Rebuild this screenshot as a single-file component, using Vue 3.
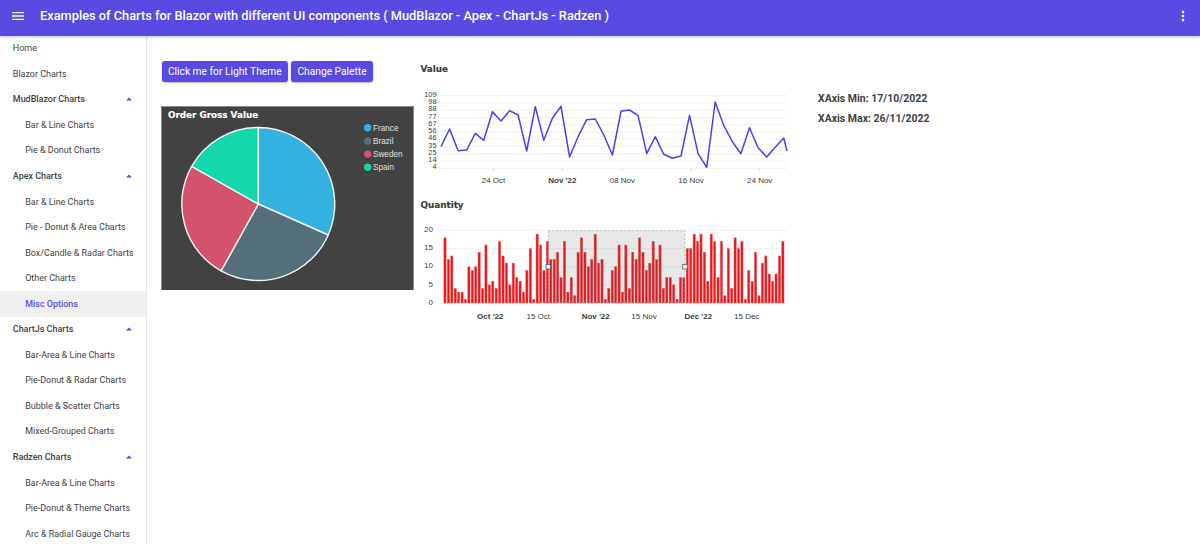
<template>
  <div class="page">
    <header class="appbar">
      <svg class="bar-icon" viewBox="0 0 24 24"><path d="M3 18h18v-2H3v2zm0-5h18v-2H3v2zm0-7v2h18V6H3z" /></svg>
      <h6 class="bar-title">Examples of Charts for Blazor with different UI components ( MudBlazor - Apex - ChartJs - Radzen )</h6>
      <svg class="bar-icon bar-more" viewBox="0 0 24 24"><path d="M12 8c1.1 0 2-.9 2-2s-.9-2-2-2-2 .9-2 2 .9 2 2 2zm0 2c-1.1 0-2 .9-2 2s.9 2 2 2 2-.9 2-2-.9-2-2-2zm0 6c-1.1 0-2 .9-2 2s.9 2 2 2 2-.9 2-2-.9-2-2-2z" /></svg>
    </header>

    <div class="layout">
      <nav class="drawer">
        <a
          v-for="item in navItems"
          :key="item.id"
          class="nav-item"
          :class="[`nav-item--${item.kind}`, { 'nav-item--active': item.active }]"
        >
          {{ item.label }}
          <svg v-if="item.kind === 'group'" class="caret" viewBox="0 0 8 5"><path d="M0 4.4 L4 0.4 L8 4.4 Z" /></svg>
        </a>
      </nav>

      <main class="content">
        <div class="col-left">
          <div class="buttons">
            <button class="btn">Click me for Light Theme</button>
            <button class="btn">Change Palette</button>
          </div>

          <svg class="pie" viewBox="0 0 253 184" width="253" height="184">
            <rect x="0" y="0" width="253" height="184" fill="#424242" />
            <path d="M0.5 184V0.5H252.5V184" fill="none" stroke="#8c8c8c" stroke-width="1" />
            <text x="7" y="12" class="chart-title pie-title">Order Gross Value</text>
            <path
              v-for="s in pieSlices"
              :key="s.name"
              :d="s.d"
              :fill="s.color"
              stroke="#f4f4f4"
              stroke-width="1.4"
            />
            <g v-for="(s, i) in pieSlices" :key="'l' + s.name">
              <circle cx="206.7" :cy="21.7 + i * 13.2" r="3.7" :fill="s.color" />
              <text x="212" :y="24.8 + i * 13.2" class="legend">{{ s.name }}</text>
            </g>
          </svg>
        </div>

        <div class="col-charts">
          <svg class="chart" viewBox="0 0 375 135" width="375" height="135">
            <text x="5.5" y="12" class="chart-title">Value</text>
            <line
              v-for="(t, i) in lineTicks"
              :key="t"
              x1="26"
              x2="372"
              :y1="35.7 + i * 7.26"
              :y2="35.7 + i * 7.26"
              class="grid"
            />
            <text
              v-for="(t, i) in lineTicks"
              :key="'y' + t"
              x="21.5"
              :y="37 + i * 7.23"
              text-anchor="end"
              class="axis axis--small"
            >{{ t }}</text>
            <g v-for="l in lineLabels" :key="l.text">
              <line :x1="l.x" :x2="l.x" y1="108.5" y2="111.5" stroke="#dcdcdc" stroke-width="1" />
              <text :x="l.x" y="123" text-anchor="middle" class="axis" :class="{ 'axis--bold': l.bold }">{{ l.text }}</text>
            </g>
            <polyline :points="linePoints" class="line" />
          </svg>

          <svg class="chart" viewBox="0 0 375 130" width="375" height="130">
            <text x="5.5" y="13" class="chart-title">Quantity</text>
            <line
              v-for="t in barTicks"
              :key="t"
              x1="26"
              x2="372"
              :y1="barY(t)"
              :y2="barY(t)"
              class="grid"
            />
            <text
              v-for="t in barTicks"
              :key="'y' + t"
              x="18"
              :y="barY(t) + 1.6"
              text-anchor="end"
              class="axis"
            >{{ t }}</text>
            <g v-for="l in barLabels" :key="l.text">
              <line :x1="l.x" :x2="l.x" y1="108" y2="110" stroke="#dcdcdc" stroke-width="1" />
              <text :x="l.x" y="123.5" text-anchor="middle" class="axis" :class="{ 'axis--bold': l.bold }">{{ l.text }}</text>
            </g>
            <rect
              v-for="(b, i) in barValues"
              :key="i"
              :x="28.9 + i * 3.413"
              :y="barY(b)"
              width="2.2"
              :height="b * 3.62"
              class="bar"
            />
            <rect x="133.3" y="35.7" width="136.7" height="72.3" class="selection" />
            <rect x="131" y="69.4" width="4.6" height="4.6" class="handle" />
            <rect x="267.7" y="69.4" width="4.6" height="4.6" class="handle" />
          </svg>
        </div>

        <div class="col-info">
          <p class="info">XAxis Min: 17/10/2022</p>
          <p class="info">XAxis Max: 26/11/2022</p>
        </div>
      </main>
    </div>
  </div>
</template>

<script setup>
const group = (label, children) => [
  { label, kind: "group" },
  ...children.map((c) => ({ label: c, kind: "child", active: c === "Misc Options" })),
];

const navItems = [
  { label: "Home", kind: "top" },
  { label: "Blazor Charts", kind: "top" },
  ...group("MudBlazor Charts", ["Bar & Line Charts", "Pie & Donut Charts"]),
  ...group("Apex Charts", [
    "Bar & Line Charts",
    "Pie - Donut & Area Charts",
    "Box/Candle & Radar Charts",
    "Other Charts",
    "Misc Options",
  ]),
  ...group("ChartJs Charts", [
    "Bar-Area & Line Charts",
    "Pie-Donut & Radar Charts",
    "Bubble & Scatter Charts",
    "Mixed-Grouped Charts",
  ]),
  ...group("Radzen Charts", [
    "Bar-Area & Line Charts",
    "Pie-Donut & Theme Charts",
    "Arc & Radial Gauge Charts",
  ]),
].map((item, i) => ({ ...item, id: i }));

// pie, angles in degrees clockwise from the top
const pieCx = 97.3;
const pieCy = 98;
const pieR = 76.5;
const polar = (deg) => {
  const a = (deg * Math.PI) / 180;
  return [pieCx + pieR * Math.sin(a), pieCy - pieR * Math.cos(a)];
};
const slice = (from, to) => {
  const [x1, y1] = polar(from);
  const [x2, y2] = polar(to);
  const large = to - from > 180 ? 1 : 0;
  return `M${pieCx} ${pieCy} L${x1} ${y1} A${pieR} ${pieR} 0 ${large} 1 ${x2} ${y2} Z`;
};
const pieSlices = [
  { name: "France", color: "#33b2df", d: slice(0, 113.9) },
  { name: "Brazil", color: "#546e7a", d: slice(113.9, 209.1) },
  { name: "Sweden", color: "#d4526e", d: slice(209.1, 299.5) },
  { name: "Spain", color: "#13d8aa", d: slice(299.5, 360) },
];

// line chart
const lineTicks = [109, 98, 88, 77, 67, 56, 46, 35, 25, 14, 4];
const lineLabels = [
  { text: "24 Oct", x: 78.5 },
  { text: "Nov '22", x: 147.3, bold: true },
  { text: "08 Nov", x: 207.3 },
  { text: "16 Nov", x: 276 },
  { text: "24 Nov", x: 344.7 },
];
const lineY = [
  275, 222, 287, 285, 235, 256, 170, 198, 167, 180, 288, 155, 256, 190, 154, 306, 245, 194, 192, 240,
  300, 169, 165, 182, 296, 245, 298, 310, 303, 181, 296, 337, 141, 212, 260, 296, 218, 278, 306, 277, 249,
];
const linePoints =
  lineY.map((y, i) => `${(26 + i * 8.57).toFixed(1)},${(y / 3 - 5).toFixed(1)}`).join(" ") + " 372,91";

// bar chart
const barTicks = [20, 15, 10, 5, 0];
const barY = (v) => 108 - v * 3.62;
const barLabels = [
  { text: "Oct '22", x: 75.3, bold: true },
  { text: "15 Oct", x: 123.3 },
  { text: "Nov '22", x: 180.7, bold: true },
  { text: "15 Nov", x: 229 },
  { text: "Dec '22", x: 283.3, bold: true },
  { text: "15 Dec", x: 331.7 },
];
const barValues = [
  18, 12, 13, 4, 3, 3, 1, 10, 9, 10, 14, 4, 16, 5, 6, 4, 17, 13, 11, 5,
  11, 7, 6, 3, 9, 15, 1, 19, 16, 9, 17, 12, 12, 14, 7, 17, 3, 7, 2, 14,
  18, 14, 10, 12, 19, 11, 12, 1, 4, 9, 10, 16, 3, 16, 4, 14, 12, 18, 14, 9,
  11, 17, 12, 16, 4, 7, 7, 5, 1, 7, 7, 15, 15, 19, 17, 19, 14, 6, 19, 17,
  7, 17, 2, 15, 4, 18, 15, 17, 1, 9, 6, 14, 2, 11, 13, 8, 6, 8, 13, 17,
];
</script>

<style>
html,
body {
  margin: 0;
  overflow: hidden;
  background: #fff;
}
</style>

<style scoped>
.page {
  width: 1200px;
  height: 544px;
  overflow: hidden;
  font-family: Roboto, "Liberation Sans", sans-serif;
  color: #424242;
}

.appbar {
  position: relative;
  z-index: 2;
  height: 36px;
  box-sizing: border-box;
  padding: 0 9px 4px 10px;
  display: flex;
  align-items: center;
  background: #594ae2;
  color: #fff;
  box-shadow: 0 1px 3px rgba(0, 0, 0, 0.25);
}

.bar-icon {
  width: 16px;
  height: 16px;
  fill: #fff;
  flex: none;
}

.bar-title {
  margin: 0 0 0 14px;
  font-size: 12.8px;
  font-weight: 500;
  line-height: 20px;
  white-space: nowrap;
}

.bar-more {
  margin-left: auto;
}

.layout {
  display: flex;
  height: 508px;
}

.drawer {
  width: 146px;
  flex: none;
  border-right: 1px solid #e6e6e6;
  padding-top: 0;
  overflow: hidden;
  display: flex;
  flex-direction: column;
}

.nav-item {
  flex: none;
  height: 25.56px;
  display: flex;
  align-items: center;
  justify-content: space-between;
  box-sizing: border-box;
  padding: 0 13px 0 12.8px;
  font-size: 8.96px;
  color: #424242;
  white-space: nowrap;
}

.nav-item:first-child {
  margin-top: -0.5px;
}

.nav-item--group {
  font-weight: 500;
}

.nav-item--child {
  padding-left: 25.2px;
}

.nav-item--active {
  background: #f0f0f0;
  color: #594ae2;
  font-weight: 500;
}

.caret {
  width: 6px;
  height: 4px;
  fill: #594ae2;
  margin-right: 1px;
}

.content {
  flex: 1;
  display: flex;
  padding: 24px 0 0 14px;
  min-width: 0;
}

.col-left {
  width: 254px;
  flex: none;
}

.buttons {
  display: flex;
  gap: 3px;
  margin: 1px 0 24px 0.5px;
}

.btn {
  height: 21px;
  padding: 0 6.4px;
  border: 0;
  border-radius: 3px;
  background: #594ae2;
  color: #fff;
  font-family: inherit;
  font-size: 10.24px;
  line-height: 21px;
  box-shadow: 0 1px 2px rgba(0, 0, 0, 0.3);
  white-space: nowrap;
}

.pie {
  display: block;
}

.col-charts {
  width: 375px;
  flex: none;
}

.chart {
  display: block;
}

.chart-title {
  font-family: "DejaVu Sans", sans-serif;
  font-size: 8.8px;
  font-weight: 700;
  fill: #373d3f;
  stroke: #373d3f;
  stroke-width: 0.15;
}

.pie-title {
  fill: #fff;
  stroke: #fff;
}

.legend {
  font-family: "Liberation Sans", sans-serif;
  font-size: 8.2px;
  fill: #e0e0e0;
}

.grid {
  stroke: #f1f1f1;
  stroke-width: 1;
}

.axis {
  font-family: "Liberation Sans", sans-serif;
  font-size: 8px;
  fill: #373d3f;
}

.axis--small {
  font-size: 7.4px;
}

.axis--bold {
  font-weight: 700;
}

.line {
  fill: none;
  stroke: #4a42ee;
  stroke-width: 1.5;
  stroke-linejoin: round;
}

.bar {
  fill: #e6171b;
  stroke: #f0555a;
  stroke-width: 0.5;
}

.selection {
  fill: rgba(90, 90, 90, 0.14);
  stroke: #b5b5b5;
  stroke-width: 0.8;
  stroke-dasharray: 2 2;
}

.handle {
  fill: #f4f4f4;
  stroke: #666;
  stroke-width: 0.9;
}

.col-info {
  margin-left: 28px;
  padding-top: 29px;
}

.info {
  margin: 0;
  font-size: 10.5px;
  line-height: 20px;
  font-weight: 700;
  color: #424242;
}
</style>
